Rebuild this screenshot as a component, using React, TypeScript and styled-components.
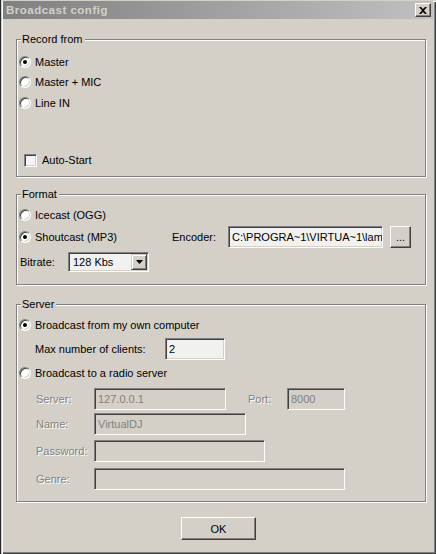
import styled, { createGlobalStyle } from "styled-components";

const Global = createGlobalStyle`
  html, body {
    margin: 0;
    padding: 0;
    background: #3a3a3a;
  }
  body {
    font-family: "Liberation Sans", Arial, sans-serif;
    font-size: 11px;
    color: #000;
  }
`;

const Window = styled.div`
  position: relative;
  width: 436px;
  height: 554px;
  box-sizing: border-box;
  background: #d4d0c8;
  display: flex;
  flex-direction: column;
  box-shadow: inset 1px 1px 0 #d4d0c8, inset 2px 2px 0 #fff,
    inset -1px -1px 0 #404040, inset -2px -2px 0 #808080;
  border-left: 1px solid #2a2a2a;
`;

const TitleBar = styled.div`
  height: 18px;
  margin: 1px 3px 0 2px;
  display: flex;
  align-items: center;
  justify-content: space-between;
  background: linear-gradient(to right, #808080, #c0c0c0);
  padding: 0 2px 0 3px;
`;

const Title = styled.span`
  font-weight: bold;
  color: #d4d0c8;
  font-size: 11.5px;
  letter-spacing: 0.5px;
`;

const CloseButton = styled.div`
  width: 16px;
  height: 14px;
  box-sizing: border-box;
  background: #d4d0c8;
  border: 1px solid;
  border-color: #fff #404040 #404040 #fff;
  box-shadow: inset -1px -1px 0 #808080;
  display: flex;
  align-items: center;
  justify-content: center;
`;

const Content = styled.div`
  padding-left: 15px;
  display: flex;
  flex-direction: column;
`;

const Group = styled.div<{ $h: number; $mt: number; $pt: number }>`
  position: relative;
  width: 410px;
  height: ${(p) => p.$h}px;
  margin-top: ${(p) => p.$mt}px;
  padding-top: ${(p) => p.$pt}px;
  box-sizing: border-box;
  border: 1px solid #808080;
  box-shadow: inset 1px 1px 0 #fff, 1px 1px 0 #fff;
  display: flex;
  flex-direction: column;
`;

const Legend = styled.span`
  position: absolute;
  top: -7px;
  left: 4px;
  padding: 0 2px 0 1px;
  background: #d4d0c8;
  line-height: 13px;
`;

const Row = styled.div<{ $mt?: number; $h?: number; $pl?: number }>`
  display: flex;
  align-items: center;
  height: ${(p) => p.$h ?? 20}px;
  margin-top: ${(p) => p.$mt ?? 0}px;
  padding-left: ${(p) => p.$pl ?? 2}px;
`;

const Option = styled.label<{ $w?: number }>`
  display: flex;
  align-items: center;
  gap: 4px;
  flex: none;
  width: ${(p) => (p.$w ? `${p.$w}px` : "auto")};
`;

const Radio = styled.span<{ $on?: boolean }>`
  position: relative;
  width: 12px;
  height: 12px;
  box-sizing: border-box;
  border-radius: 50%;
  border: 1px solid;
  border-color: #808080 #fff #fff #808080;
  box-shadow: inset 1px 1px 0 #404040, inset -1px -1px 0 #d4d0c8;
  background: #fff;
  &::after {
    content: "";
    display: ${(p) => (p.$on ? "block" : "none")};
    position: absolute;
    left: 3px;
    top: 3px;
    width: 4px;
    height: 4px;
    border-radius: 50%;
    background: #000;
  }
`;

const Check = styled.span`
  width: 13px;
  height: 13px;
  box-sizing: border-box;
  border: 1px solid;
  border-color: #808080 #fff #fff #808080;
  box-shadow: inset 1px 1px 0 #404040, inset -1px -1px 0 #d4d0c8;
  background: #f4f4f4;
  margin-left: 5px;
  margin-right: 1px;
`;

const Label = styled.span<{ $w?: number; $off?: boolean; $ml?: number }>`
  flex: none;
  width: ${(p) => (p.$w ? `${p.$w}px` : "auto")};
  margin-left: ${(p) => p.$ml ?? 0}px;
  color: ${(p) => (p.$off ? "#808080" : "#000")};
  text-shadow: ${(p) => (p.$off ? "1px 1px 0 #fff" : "none")};
`;

const Field = styled.div<{ $w: number; $off?: boolean; $h?: number }>`
  flex: none;
  width: ${(p) => p.$w}px;
  height: ${(p) => p.$h ?? 22}px;
  box-sizing: border-box;
  border: 1px solid;
  border-color: #808080 #fff #fff #808080;
  box-shadow: inset 1px 1px 0 #404040, inset -1px -1px 0 #d4d0c8;
  background: ${(p) => (p.$off ? "#d4d0c8" : "#f1f1ef")};
  color: ${(p) => (p.$off ? "#808080" : "#000")};
  padding: 0 3px;
  display: flex;
  align-items: center;
  white-space: nowrap;
  overflow: hidden;
`;

const Button = styled.div<{ $w: number; $h: number; $ml?: number }>`
  flex: none;
  width: ${(p) => p.$w}px;
  height: ${(p) => p.$h}px;
  margin-left: ${(p) => p.$ml ?? 0}px;
  box-sizing: border-box;
  border: 1px solid;
  border-color: #fff #404040 #404040 #fff;
  box-shadow: inset -1px -1px 0 #808080;
  background: #d4d0c8;
  display: flex;
  align-items: center;
  justify-content: center;
`;

const Select = styled.div`
  flex: none;
  width: 81px;
  height: 20px;
  box-sizing: border-box;
  border: 1px solid;
  border-color: #808080 #fff #fff #808080;
  box-shadow: inset 1px 1px 0 #404040, inset -1px -1px 0 #d4d0c8;
  background: #f1f1ef;
  display: flex;
  align-items: center;
  justify-content: space-between;
  padding: 1px 1px 1px 4px;
`;

const DropButton = styled.div`
  width: 16px;
  height: 16px;
  box-sizing: border-box;
  border: 1px solid;
  border-color: #d4d0c8 #404040 #404040 #d4d0c8;
  box-shadow: inset 1px 1px 0 #fff, inset -1px -1px 0 #808080;
  background: #d4d0c8;
  display: flex;
  align-items: center;
  justify-content: center;
`;

const Footer = styled.div`
  display: flex;
  justify-content: center;
  margin-top: 15px;
`;

export default function App() {
  return (
    <>
      <Global />
      <Window>
        <TitleBar>
          <Title>Broadcast config</Title>
          <CloseButton>
            <svg width="8" height="7" viewBox="0 0 8 7">
              <path d="M0 0h2l2 2 2-2h2L5 3.5 8 7H6L4 5 2 7H0l3-3.5z" fill="#000" />
            </svg>
          </CloseButton>
        </TitleBar>
        <Content>
          <Group $h={138} $mt={20} $pt={12}>
            <Legend>Record from</Legend>
            <Row>
              <Option>
                <Radio $on />
                Master
              </Option>
            </Row>
            <Row>
              <Option>
                <Radio />
                Master + MIC
              </Option>
            </Row>
            <Row $mt={1}>
              <Option>
                <Radio />
                Line IN
              </Option>
            </Row>
            <Row $mt={37}>
              <Option>
                <Check />
                Auto-Start
              </Option>
            </Row>
          </Group>

          <Group $h={91} $mt={17} $pt={10}>
            <Legend>Format</Legend>
            <Row>
              <Option>
                <Radio />
                Icecast (OGG)
              </Option>
            </Row>
            <Row $h={22} $mt={1}>
              <Option $w={153}>
                <Radio $on />
                Shoutcast (MP3)
              </Option>
              <Label $w={56}>Encoder:</Label>
              <Field $w={155}>C:\PROGRA~1\VIRTUA~1\lam</Field>
              <Button $w={21} $h={22} $ml={7}>
                ...
              </Button>
            </Row>
            <Row $mt={4} $pl={3}>
              <Label $w={48}>Bitrate:</Label>
              <Select>
                <span>128 Kbs</span>
                <DropButton>
                  <svg width="7" height="4" viewBox="0 0 7 4">
                    <path d="M0 0h7L3.5 4z" fill="#000" />
                  </svg>
                </DropButton>
              </Select>
            </Row>
          </Group>

          <Group $h={198} $mt={19} $pt={10}>
            <Legend>Server</Legend>
            <Row>
              <Option>
                <Radio $on />
                Broadcast from my own computer
              </Option>
            </Row>
            <Row $h={22} $mt={3} $pl={18}>
              <Label $w={130}>Max number of clients:</Label>
              <Field $w={60}>2</Field>
            </Row>
            <Row $mt={3}>
              <Option>
                <Radio />
                Broadcast to a radio server
              </Option>
            </Row>
            <Row $h={22} $mt={5} $pl={19}>
              <Label $w={58} $off>
                Server:
              </Label>
              <Field $w={132} $off>
                127.0.0.1
              </Field>
              <Label $w={39} $ml={22} $off>
                Port:
              </Label>
              <Field $w={58} $off>
                8000
              </Field>
            </Row>
            <Row $h={22} $mt={3} $pl={19}>
              <Label $w={58} $off>
                Name:
              </Label>
              <Field $w={152} $off>
                VirtualDJ
              </Field>
            </Row>
            <Row $h={22} $mt={5} $pl={19}>
              <Label $w={58} $off>
                Password:
              </Label>
              <Field $w={171} $off />
            </Row>
            <Row $h={22} $mt={6} $pl={19}>
              <Label $w={58} $off>
                Genre:
              </Label>
              <Field $w={251} $off />
            </Row>
          </Group>
        </Content>
        <Footer>
          <Button $w={75} $h={23}>
            OK
          </Button>
        </Footer>
      </Window>
    </>
  );
}
